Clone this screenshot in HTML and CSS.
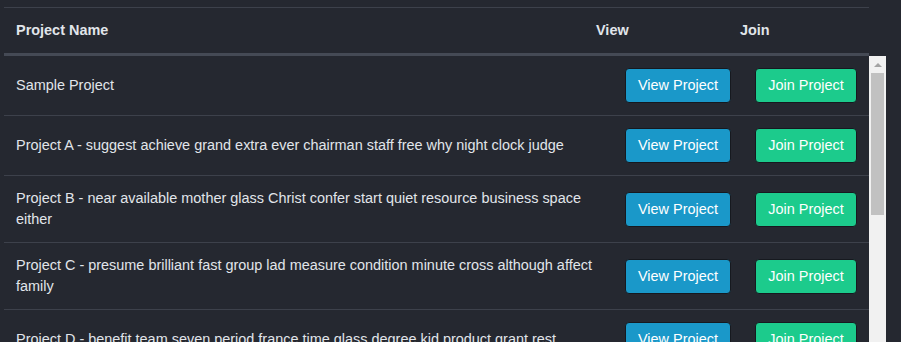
FILE: index.html
```html
<!DOCTYPE html>
<html lang="en">
<head>
  <meta charset="UTF-8" />
  <title>Projects</title>
  <link rel="stylesheet" href="styles.css">
</head>
<body>

<div class="project-list">
  <table class="project-head">
    <tr>
      <th class="col-name">Project Name</th>
      <th class="col-view">View</th>
      <th class="col-join">Join</th>
    </tr>
  </table>

  <div class="project-scroll">
    <div class="project-rows">
      <table class="project-body">
        <tr>
          <td class="col-name">Sample Project</td>
          <td class="col-view"><a class="btn btn-view" href="#">View Project</a></td>
          <td class="col-join"><a class="btn btn-join" href="#">Join Project</a></td>
        </tr>
        <tr>
          <td class="col-name">Project A - suggest achieve grand extra ever chairman staff free why night clock judge</td>
          <td class="col-view"><a class="btn btn-view" href="#">View Project</a></td>
          <td class="col-join"><a class="btn btn-join" href="#">Join Project</a></td>
        </tr>
        <tr>
          <td class="col-name">Project B - near available mother glass Christ confer start quiet resource business space either</td>
          <td class="col-view"><a class="btn btn-view" href="#">View Project</a></td>
          <td class="col-join"><a class="btn btn-join" href="#">Join Project</a></td>
        </tr>
        <tr>
          <td class="col-name">Project C - presume brilliant fast group lad measure condition minute cross although affect family</td>
          <td class="col-view"><a class="btn btn-view" href="#">View Project</a></td>
          <td class="col-join"><a class="btn btn-join" href="#">Join Project</a></td>
        </tr>
        <tr>
          <td class="col-name">Project D - benefit team seven period france time glass degree kid product grant rest</td>
          <td class="col-view"><a class="btn btn-view" href="#">View Project</a></td>
          <td class="col-join"><a class="btn btn-join" href="#">Join Project</a></td>
        </tr>
        <tr>
          <td class="col-name">Project E - travel simple order hotel quarter speak ground market</td>
          <td class="col-view"><a class="btn btn-view" href="#">View Project</a></td>
          <td class="col-join"><a class="btn btn-join" href="#">Join Project</a></td>
        </tr>
      </table>
    </div>
    <!-- Scrollleiste nachgebaut, damit sie im Bild erscheint -->
    <div class="scrollbar">
      <span class="scrollbar-up"></span>
      <span class="scrollbar-thumb"></span>
    </div>
  </div>
</div>

</body>
</html>
```

FILE: styles.css
```css
html, body {
  margin: 0;
  background: #252830;
  overflow: hidden;
}
body {
  padding: 7px 15px 0 4px;
  font-family: "Liberation Sans", Arial, sans-serif;
  font-size: 14.45px;
  line-height: 21px;
  color: #e1e5ea;
}
.project-list {
  width: 882px;
}
table {
  border-collapse: collapse;
  table-layout: fixed;
}
.project-head {
  width: 865px;
  border-top: 1px solid #3d414b;
  border-bottom: 3px solid #454a55;
}
.project-head th {
  text-align: left;
  font-weight: bold;
  padding: 12px;
}
.project-head .col-name { width: 556px; }
.project-head .col-view { width: 120px; }
.project-head .col-join { width: 117px; }

.project-scroll {
  display: flex;
  height: 300px;
}
.project-rows {
  width: 865px;
  overflow: hidden;
}
.project-body {
  width: 865px;
}
.project-body td {
  padding: 12px;
  border-bottom: 1px solid #3d414b;
  vertical-align: middle;
}
.project-body .col-name { width: 586px; }
.project-body .col-view { width: 106px; }
.project-body .col-join { width: 101px; }

.btn {
  display: inline-block;
  box-sizing: border-box;
  height: 35px;
  padding: 6px 0;
  border: 1px solid #16191f;
  border-radius: 4px;
  color: #fff;
  text-align: center;
  text-decoration: none;
  white-space: nowrap;
}
.btn-view {
  width: 106px;
  margin-left: -1px;
  background: #1a98c9;
}
.btn-join {
  width: 102px;
  margin-left: -1px;
  background: #1ccb8c;
}

/* Scrollbar */
.scrollbar {
  width: 17px;
  background: #f1f1f1;
  display: flex;
  flex-direction: column;
  align-items: center;
}
.scrollbar-up {
  width: 0;
  height: 0;
  margin: 7px 0 6px;
  border-left: 4px solid transparent;
  border-right: 4px solid transparent;
  border-bottom: 4px solid #a3a3a3;
}
.scrollbar-thumb {
  width: 13px;
  height: 142px;
  background: #c1c1c1;
}
```
